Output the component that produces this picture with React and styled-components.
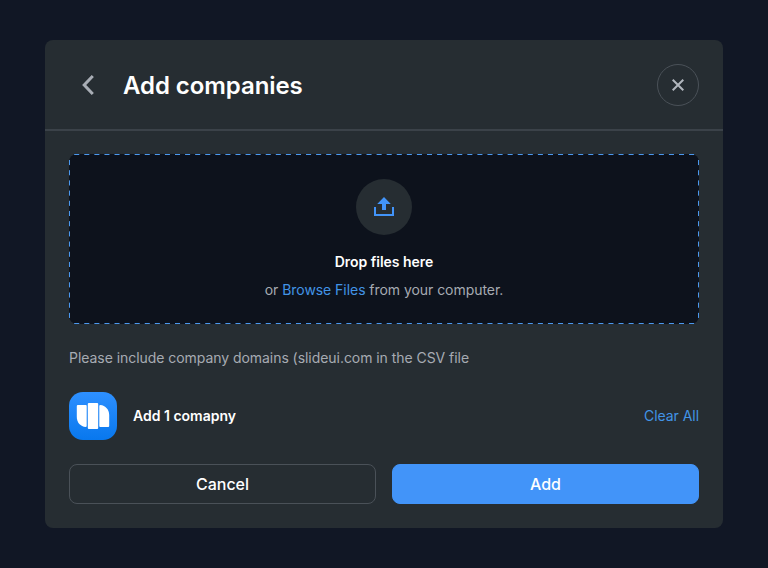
import React from "react";
import styled, { createGlobalStyle } from "styled-components";

const GlobalStyle = createGlobalStyle`
  *, *::before, *::after { box-sizing: border-box; }
  body {
    margin: 0;
    background: #111725;
    font-family: Inter, "Liberation Sans", sans-serif;
    -webkit-font-smoothing: antialiased;
  }
  button { font: inherit; margin: 0; padding: 0; cursor: pointer; }
  p, h1 { margin: 0; }
  svg { display: block; }
`;

const Page = styled.main`
  height: 568px;
  padding: 40px 45px;
`;

const Dialog = styled.section`
  width: 678px;
  height: 488px;
  border-radius: 8px;
  background: #262d32;
  overflow: hidden;
`;

const Header = styled.header`
  display: flex;
  align-items: center;
  height: 91px;
  padding: 0 24px 0 31px;
  border-bottom: 2px solid #3b4249;
`;

const BackButton = styled.button`
  width: 24px;
  height: 24px;
  border: 0;
  background: none;
`;

const Title = styled.h1`
  flex: 1;
  margin-left: 23px;
  padding-top: 2px;
  color: #fff;
  font-size: 24px;
  font-weight: 600;
  line-height: 32px;
  letter-spacing: -0.07px;
`;

const CloseButton = styled.button`
  display: grid;
  place-items: center;
  width: 42px;
  height: 42px;
  border: 1px solid #4a5158;
  border-radius: 50%;
  background: none;
`;

const Body = styled.div`
  padding: 23px 24px 24px;
`;

const DropZone = styled.div`
  position: relative;
  display: flex;
  flex-direction: column;
  align-items: center;
  height: 170px;
  padding-top: 25px;
  border-radius: 8px;
  background: #0d121c;
`;

const DashedOutline = styled.svg`
  position: absolute;
  inset: 0;
  pointer-events: none;
`;

const UploadBadge = styled.div`
  display: grid;
  place-items: center;
  width: 56px;
  height: 56px;
  border-radius: 50%;
  background: #262d32;
`;

const DropTitle = styled.p`
  margin-top: 15px;
  color: #fff;
  font-size: 14px;
  font-weight: 600;
  line-height: 24px;
  letter-spacing: -0.03px;
`;

const Copy = styled.p`
  margin-top: ${(p) => p.$gap}px;
  color: #a6abb2;
  font-size: 14px;
  line-height: 24px;
  letter-spacing: -0.05px;
`;

const LinkButton = styled.button`
  border: 0;
  background: none;
  color: #4294e6;
  font-size: 14px;
  line-height: 24px;
  letter-spacing: -0.05px;
`;

const CompanyRow = styled.div`
  display: flex;
  align-items: center;
  gap: 16px;
  height: 48px;
  margin-top: 22px;
`;

const CompanyName = styled.p`
  flex: 1;
  color: #fff;
  font-size: 14px;
  font-weight: 600;
  line-height: 24px;
`;

const Actions = styled.div`
  display: grid;
  grid-template-columns: 1fr 1fr;
  gap: 16px;
  margin-top: 24px;
`;

const ActionButton = styled.button`
  height: 40px;
  border: 1px solid ${(p) => (p.$primary ? "#4294f9" : "#4a5158")};
  border-radius: 8px;
  background: ${(p) => (p.$primary ? "#4294f9" : "transparent")};
  color: #fff;
  font-size: 16px;
  font-weight: 500;
  line-height: 24px;
`;

const BackIcon = () => (
  <svg width="24" height="24" fill="none" stroke="#a8adb5" strokeWidth="3">
    <path d="M16.8 3 8.2 12l8.6 9" />
  </svg>
);

const CloseIcon = () => (
  <svg width="12" height="12" fill="none" stroke="#b1b6bd" strokeWidth="2">
    <path d="m.7.7 10.6 10.6M11.3.7.7 11.3" />
  </svg>
);

const UploadIcon = () => (
  <svg width="24" height="24" fill="#4294f9">
    <path d="M12 2 5.2 9H10v6h4V9h4.8z" />
    <path d="M2 12h2v7h16v-7h2v9H2z" />
  </svg>
);

const CompanyLogo = () => (
  <svg width="48" height="48">
    <defs>
      <linearGradient id="logo-fill" x1="0" y1="0" x2="0" y2="1">
        <stop stopColor="#2e90ff" />
        <stop offset="1" stopColor="#0878ee" />
      </linearGradient>
    </defs>
    <rect width="48" height="48" rx="14" fill="url(#logo-fill)" />
    <g fill="#fff">
      <path d="M8.8 13h8q.9 0 .9 1v20q0 1-1 1C11.5 34.5 7.8 30.5 7.8 25V14q0-1 1-1z" />
      <rect x="18.8" y="11" width="10.4" height="26" rx="1" />
      <path d="M31.3 13C36.5 13.5 40.2 17.5 40.2 23v11q0 1-1 1h-8q-.9 0-.9-1V14q0-1 1-1z" />
    </g>
  </svg>
);

export default function App() {
  return (
    <>
      <GlobalStyle />
      <Page>
        <Dialog aria-label="Add companies">
          <Header>
            <BackButton aria-label="Back"><BackIcon /></BackButton>
            <Title>Add companies</Title>
            <CloseButton aria-label="Close"><CloseIcon /></CloseButton>
          </Header>
          <Body>
            <DropZone>
              <DashedOutline width="630" height="170" fill="none" stroke="#4b98ee">
                <path d="M5.2.5H625.3M5.2 169.5H625.3" strokeDasharray="5.04" />
                <path d="M.5 6V164M629.5 6V164" strokeDasharray="5.095" />
              </DashedOutline>
              <UploadBadge><UploadIcon /></UploadBadge>
              <DropTitle>Drop files here</DropTitle>
              <Copy $gap={4}>
                or <LinkButton>Browse Files</LinkButton> from your computer.
              </Copy>
            </DropZone>
            <Copy $gap={22}>Please include company domains (slideui.com in the CSV file</Copy>
            <CompanyRow>
              <CompanyLogo />
              <CompanyName>Add 1 comapny</CompanyName>
              <LinkButton>Clear All</LinkButton>
            </CompanyRow>
            <Actions>
              <ActionButton>Cancel</ActionButton>
              <ActionButton $primary>Add</ActionButton>
            </Actions>
          </Body>
        </Dialog>
      </Page>
    </>
  );
}
